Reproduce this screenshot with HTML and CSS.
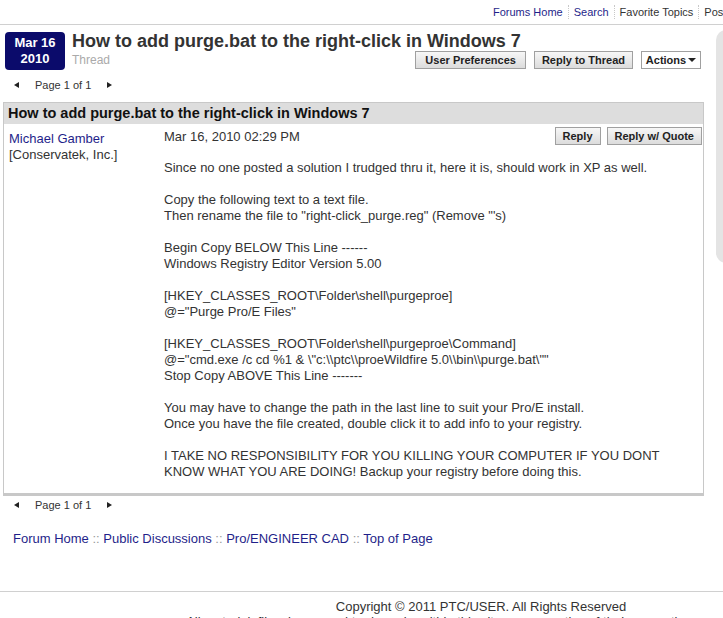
FILE: index.html
```html
<!DOCTYPE html>
<html>
<head>
<meta charset="utf-8">
<title>How to add purge.bat to the right-click in Windows 7</title>
<link rel="stylesheet" href="styles.css">
</head>
<body>
<div class="page">
  <nav class="topnav">
    <a class="navlink" href="#">Forums Home</a><span class="sep"></span>
    <a class="navlink" href="#">Search</a><span class="sep"></span>
    <span class="navplain">Favorite Topics</span><span class="sep"></span>
    <span class="navplain">Post New Topic</span><span class="sep"></span>
    <a class="navlink" href="#">My Profile</a><span class="sep"></span>
    <a class="navlink" href="#">Log Out</a>
  </nav>
  <div class="layout">
    <main class="main">
      <header class="thread-head">
        <div class="datebadge">Mar 16<br>2010</div>
        <div class="titleblock">
          <h1 class="thread-title">How to add purge.bat to the right-click in Windows 7</h1>
          <div class="subrow">
            <span class="kind">Thread</span>
            <div class="btns">
              <button class="btn btn-wide">User Preferences</button>
              <button class="btn">Reply to Thread</button>
              <button class="btn btn-menu">Actions<span class="caret"></span></button>
            </div>
          </div>
        </div>
      </header>
      <div class="pager">
        <span class="arrow arrow-left"></span>
        <span class="pager-text">Page 1 of 1</span>
        <span class="arrow arrow-right"></span>
      </div>
      <section class="post">
        <div class="post-title">How to add purge.bat to the right-click in Windows 7</div>
        <div class="post-row">
          <div class="author">
            <a class="author-name" href="#">Michael Gamber</a>
            <div class="author-org">[Conservatek, Inc.]</div>
          </div>
          <div class="content">
            <div class="meta">
              <span class="post-date">Mar 16, 2010 02:29 PM</span>
              <div class="btns btns-post">
                <button class="btn">Reply</button>
                <button class="btn">Reply w/ Quote</button>
              </div>
            </div>
            <div class="post-body">
              <p>Since no one posted a solution I trudged thru it, here it is, should work in XP as well.</p>
              <p>Copy the following text to a text file.<br>Then rename the file to "right-click_purge.reg" (Remove "'s)</p>
              <p>Begin Copy BELOW This Line ------<br>Windows Registry Editor Version 5.00</p>
              <p>[HKEY_CLASSES_ROOT\Folder\shell\purgeproe]<br>@="Purge Pro/E Files"</p>
              <p>[HKEY_CLASSES_ROOT\Folder\shell\purgeproe\Command]<br>@="cmd.exe /c cd %1 &amp; \"c:\\ptc\\proeWildfire 5.0\\bin\\purge.bat\""<br>Stop Copy ABOVE This Line -------</p>
              <p>You may have to change the path in the last line to suit your Pro/E install.<br>Once you have the file created, double click it to add info to your registry.</p>
              <p>I TAKE NO RESPONSIBILITY FOR YOU KILLING YOUR COMPUTER IF YOU DONT<br>KNOW WHAT YOU ARE DOING! Backup your registry before doing this.</p>
            </div>
          </div>
        </div>
      </section>
      <div class="pager pager-bottom">
        <span class="arrow arrow-left"></span>
        <span class="pager-text">Page 1 of 1</span>
        <span class="arrow arrow-right"></span>
      </div>
      <div class="crumbs">
        <a href="#">Forum Home</a> <span class="crumb-sep">::</span> <a href="#">Public Discussions</a> <span class="crumb-sep">::</span> <a href="#">Pro/ENGINEER CAD</a> <span class="crumb-sep">::</span> <a href="#">Top of Page</a>
      </div>
    </main>
    <aside class="sidebar"></aside>
  </div>
  <footer class="footer">
    <div>Copyright © 2011 PTC/USER. All Rights Reserved</div>
    <div>All material, files, logos, and trademarks within this site are properties of their respective organizations.</div>
  </footer>
</div>
</body>
</html>
```

FILE: styles.css
```css
html {
  overflow: hidden;
}
body {
  margin: 0;
  font-family: "Liberation Sans", Arial, sans-serif;
  color: #333;
  background: #fff;
}
a {
  text-decoration: none;
  color: #1f1f8a;
}
.page {
  width: 962px;
}
.topnav {
  display: flex;
  align-items: center;
  height: 24px;
  padding-left: 493px;
  border-bottom: 1px solid #d0d0d0;
  font-size: 11px;
  white-space: nowrap;
}
.navlink {
  color: #1f1f8a;
}
.navplain {
  color: #333;
}
.sep {
  display: inline-block;
  height: 14px;
  margin: 0 5px;
  border-left: 1px dotted #c8c8c8;
}
.layout {
  display: flex;
  align-items: flex-start;
}
.main {
  width: 716px;
  flex: none;
}
.sidebar {
  flex: 1;
  margin-top: 5px;
  height: 233px;
  background: #e4e4e4;
  border-radius: 10px 0 0 10px;
}
.thread-head {
  display: flex;
  gap: 7px;
  margin: 7px 0 0 5px;
}
.datebadge {
  width: 60px;
  height: 38px;
  box-sizing: border-box;
  padding-top: 3px;
  background: #0b0b6b;
  color: #fff;
  border-radius: 4px;
  font-size: 13px;
  font-weight: bold;
  line-height: 16px;
  text-align: center;
}
.titleblock {
  width: 629px;
}
.thread-title {
  margin: 0;
  font-size: 18px;
  line-height: 19px;
  font-weight: bold;
  color: #333;
  white-space: nowrap;
}
.subrow {
  display: flex;
  justify-content: space-between;
  align-items: center;
  height: 18px;
}
.kind {
  font-size: 12px;
  color: #aaa;
}
.btns {
  display: flex;
  gap: 8px;
}
.btn {
  height: 18px;
  margin: 0;
  padding: 0 7px;
  border: 1px solid #a0a0a0;
  background: linear-gradient(#f7f7f7, #dcdcdc);
  font-family: "Liberation Sans", Arial, sans-serif;
  font-size: 11px;
  font-weight: bold;
  line-height: 16px;
  color: #222;
}
.btn-wide {
  padding: 0 9px;
}
.btn-menu {
  display: flex;
  align-items: center;
  justify-content: center;
  gap: 2px;
  width: 60px;
  padding: 0;
  background: #fff;
}
.caret {
  display: inline-block;
  width: 0;
  height: 0;
  border-left: 4px solid transparent;
  border-right: 4px solid transparent;
  border-top: 4px solid #222;
}
.pager {
  display: flex;
  align-items: center;
  height: 14px;
  margin-top: 8px;
  padding-left: 14px;
  font-size: 11px;
  color: #333;
}
.pager-text {
  margin: 0 16px 0 16px;
}
.arrow {
  display: inline-block;
  width: 0;
  height: 0;
  border-top: 3px solid transparent;
  border-bottom: 3px solid transparent;
}
.arrow-left {
  border-right: 5px solid #222;
}
.arrow-right {
  border-left: 5px solid #222;
}
.post {
  margin: 10px 0 0 3px;
  width: 701px;
  box-sizing: border-box;
  border: 1px solid #c8c8c8;
  border-bottom: 3px solid #c8c8c8;
}
.post-title {
  height: 21px;
  padding-left: 4px;
  background: #dddddd;
  font-size: 14.5px;
  font-weight: bold;
  line-height: 21px;
  color: #111;
}
.post-row {
  display: flex;
  padding-top: 3px;
}
.author {
  width: 155px;
  padding: 4px 0 0 5px;
  font-size: 13px;
  line-height: 16px;
}
.author-name {
  color: #1f1f8a;
}
.content {
  flex: 1;
  padding-right: 1px;
}
.meta {
  display: flex;
  justify-content: space-between;
  align-items: center;
  height: 18px;
  font-size: 13px;
}
.btns-post {
  gap: 6px;
}
.post-body {
  margin-top: 15px;
  padding-bottom: 13px;
  font-size: 13px;
  line-height: 16px;
}
.post-body p {
  margin: 0 0 16px;
}
.post-body p:last-child {
  margin-bottom: 0;
}
.pager-bottom {
  margin-top: 2px;
}
.crumbs {
  margin-top: 19px;
  padding-left: 13px;
  font-size: 13px;
  line-height: 16px;
}
.crumb-sep {
  color: #999;
}
.footer {
  margin-top: 44px;
  padding-top: 7px;
  border-top: 1px solid #d0d0d0;
  text-align: center;
  font-size: 13px;
  line-height: 15px;
  color: #333;
}
```
